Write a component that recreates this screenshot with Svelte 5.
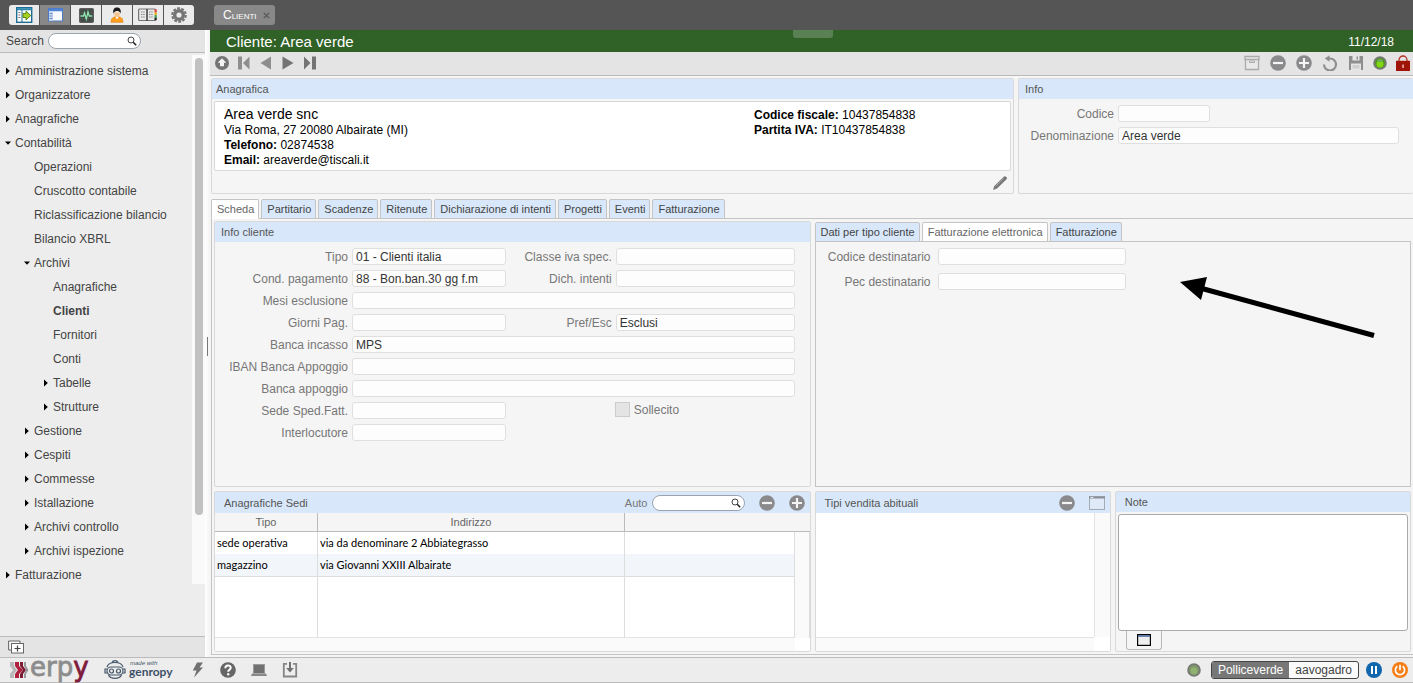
<script>
  const tree = [
    { t: 'Amministrazione sistema', l: 0, s: 'closed' },
    { t: 'Organizzatore', l: 0, s: 'closed' },
    { t: 'Anagrafiche', l: 0, s: 'closed' },
    { t: 'Contabilità', l: 0, s: 'open' },
    { t: 'Operazioni', l: 1 },
    { t: 'Cruscotto contabile', l: 1 },
    { t: 'Riclassificazione bilancio', l: 1 },
    { t: 'Bilancio XBRL', l: 1 },
    { t: 'Archivi', l: 1, s: 'open' },
    { t: 'Anagrafiche', l: 2 },
    { t: 'Clienti', l: 2, current: true },
    { t: 'Fornitori', l: 2 },
    { t: 'Conti', l: 2 },
    { t: 'Tabelle', l: 2, s: 'closed' },
    { t: 'Strutture', l: 2, s: 'closed' },
    { t: 'Gestione', l: 1, s: 'closed' },
    { t: 'Cespiti', l: 1, s: 'closed' },
    { t: 'Commesse', l: 1, s: 'closed' },
    { t: 'Istallazione', l: 1, s: 'closed' },
    { t: 'Archivi controllo', l: 1, s: 'closed' },
    { t: 'Archivi ispezione', l: 1, s: 'closed' },
    { t: 'Fatturazione', l: 0, s: 'closed' }
  ];
  const tabs = ['Scheda', 'Partitario', 'Scadenze', 'Ritenute', 'Dichiarazione di intenti', 'Progetti', 'Eventi', 'Fatturazione'];
  const subTabs = ['Dati per tipo cliente', 'Fatturazione elettronica', 'Fatturazione'];
  let tab = $state('Scheda');
  let subTab = $state('Fatturazione elettronica');
  const fields = [
    { id: 'tipo', label: 'Tipo', value: '01 - Clienti italia' },
    { id: 'classe', label: 'Classe iva spec.', value: '' },
    { id: 'cond', label: 'Cond. pagamento', value: '88 - Bon.ban.30 gg f.m' },
    { id: 'dich', label: 'Dich. intenti', value: '' },
    { id: 'mesi', label: 'Mesi esclusione', value: '', wide: true },
    { id: 'giorni', label: 'Giorni Pag.', value: '' },
    { id: 'pref', label: 'Pref/Esc', value: 'Esclusi' },
    { id: 'banca', label: 'Banca incasso', value: 'MPS', wide: true },
    { id: 'iban', label: 'IBAN Banca Appoggio', value: '', wide: true },
    { id: 'appoggio', label: 'Banca appoggio', value: '', wide: true },
    { id: 'sede', label: 'Sede Sped.Fatt.', value: '' }
  ];
</script>

{#snippet minus()}
  <svg width="16" height="16" viewBox="0 0 16 16"><circle cx="8" cy="8" r="7.8" fill="#8a8a8c" /><path d="M3 8h10" stroke="#f4f4f4" stroke-width="2.2" /></svg>
{/snippet}
{#snippet plus()}
  <svg width="16" height="16" viewBox="0 0 16 16"><circle cx="8" cy="8" r="7.8" fill="#8a8a8c" /><path d="M3 8h10M8 3v10" stroke="#f4f4f4" stroke-width="2.2" /></svg>
{/snippet}
{#snippet lens()}
  <svg class="lens" width="10" height="10" viewBox="0 0 10 10"><circle cx="4" cy="4" r="3" fill="#fff" stroke="#444" /><path d="M6.2 6.2L9.2 9.2" stroke="#222" stroke-width="1.6" /></svg>
{/snippet}

<div class="app">
  <header class="topbar">
    <div class="modes">
      <button aria-label="Apri menu">
        <svg width="17" height="16" viewBox="0 0 17 16"><rect x=".7" y=".7" width="15" height="14.6" fill="#fff" stroke="#1d6c92" stroke-width="1.4" /><path d="M1 2.2h15" stroke="#2b86ab" stroke-width="2" /><path d="M6 3v12" stroke="#1d6c92" /><path d="M2.4 5.5h2M2.4 8h2M2.4 10.500h2" stroke="#777" /><path d="M7 6.500h3V4l4.800 4.500L10 13v-2.500H7z" fill="#a6d11e" stroke="#4f7d10" stroke-width=".9" /></svg>
      </button>
      <button class="on" aria-label="Menu">
        <svg width="15" height="14" viewBox="0 0 15 14"><rect x=".5" y=".5" width="14" height="12.500" fill="#f7faff" stroke="#4c78c0" /><path d="M.5 2h14" stroke="#4f83d6" stroke-width="2.500" /><rect x="1" y="3.300" width="4" height="9.200" fill="#c9d9f2" /><path d="M1.500 5.500h3M1.500 8h3M1.500 10.500h3" stroke="#6f8fc4" /></svg>
      </button>
      <button aria-label="Monitor">
        <svg width="15" height="15" viewBox="0 0 15 15"><rect x=".7" y=".7" width="13.600" height="13.600" rx="1" fill="#3d4541" stroke="#5d5d5d" stroke-width="1.400" /><path d="M3 2v11M6 2v11M9 2v11M12 2v11M2 4.500h11M2 10.500h11" stroke="#59645e" stroke-width=".5" /><path d="M1.500 8h3l1-3 1.800 6 1.700-7 1.300 4h3" fill="none" stroke="#8fe3b0" stroke-width="1.300" /></svg>
      </button>
      <button aria-label="Utente">
        <svg width="14" height="16" viewBox="0 0 14 16"><path d="M1 15.300c0-4 2-5.600 6-5.600s6 1.600 6 5.600z" fill="#ff9d1e" stroke="#d9780a" stroke-width=".6" /><path d="M5.300 9.600L7 12.500l1.700-2.900z" fill="#fff" /><path d="M4 5.500c0 3 1.300 4.600 3 4.600s3-1.600 3-4.600z" fill="#f6c58f" /><path d="M3.300 6.500C2.800 2.400 4.200.6 7 .6s4.200 1.800 3.700 5.900C10 5 9 4 7.500 4 6 4 4.300 4.500 3.300 6.500z" fill="#1c1c1c" /></svg>
      </button>
      <button aria-label="Rubrica">
        <svg width="20" height="14" viewBox="0 0 20 14"><rect x=".6" y="1" width="17" height="11.500" rx="1" fill="#e8e8e8" stroke="#777" stroke-width="1.200" /><path d="M9 1v12" stroke="#333" stroke-width="1.400" /><path d="M3 4h4M3 6.500h4M3 9h4M11 4h4M11 6.500h4M11 9h4" stroke="#888" stroke-dasharray="1.500 .7" /><path d="M17.600 1.200v3" stroke="#d44" stroke-width="2.200" /><path d="M17.600 4.200v3" stroke="#e8b21a" stroke-width="2.200" /><path d="M17.600 7.200v2.500" stroke="#35a552" stroke-width="2.200" /><path d="M17.600 9.700v2.500" stroke="#222" stroke-width="2.200" /></svg>
      </button>
      <button aria-label="Impostazioni">
        <svg width="16" height="16" viewBox="0 0 16 16"><circle cx="8" cy="8" r="4.300" fill="none" stroke="#747474" stroke-width="3.400" /><circle cx="8" cy="8" r="6.700" fill="none" stroke="#747474" stroke-width="2.200" stroke-dasharray="2.800 1.410" /></svg>
      </button>
    </div>
    <div class="pagetab"><span>Clienti</span><button aria-label="Chiudi"><svg width="7" height="7" viewBox="0 0 7 7"><path d="M.8.8l5.400 5.400M6.200.8L.8 6.200" stroke="#555" stroke-width="1.200" /></svg></button></div>
  </header>

  <div class="body">
    <aside>
      <div class="searchrow"><label for="q">Search</label><span class="pill"><input id="q" type="text" />{@render lens()}</span></div>
      <div class="treearea">
        <nav>
          {#each tree as n}
            <a href="#top" class={'node l' + n.l} class:current={n.current}>
              <span class="mark">
                {#if n.s === 'closed'}<svg width="6" height="8" viewBox="0 0 6 8"><path d="M1 .5L4.800 4 1 7.500z" /></svg>
                {:else if n.s === 'open'}<svg width="6" height="8" viewBox="0 0 6 8"><path d="M0 2.500h6L3 5.800z" /></svg>{/if}
              </span>{n.t}</a>
          {/each}
        </nav>
        <div class="rail"><div class="thumb"></div></div>
      </div>
      <div class="sidefoot">
        <button aria-label="Nuova finestra"><svg width="16" height="14" viewBox="0 0 16 14"><path d="M3 10H.6V1H12v2" fill="#f6f6f6" stroke="#666" /><rect x="3.500" y="3.500" width="12" height="9.500" fill="#fff" stroke="#666" /><path d="M9.500 5.500v6M6.500 8.500h6" stroke="#444" stroke-width="1.200" /></svg></button>
      </div>
    </aside>
    <div class="splitter"><i></i></div>

    <main>
      <div class="title"><h1>Cliente: Area verde</h1><i class="grip"></i><time>11/12/18</time></div>
      <div class="tools">
        <div class="navs">
          <button aria-label="Elenco"><svg width="14" height="14" viewBox="0 0 14 14"><circle cx="7" cy="7" r="7" fill="#747474" /><path d="M7 2.300l4.300 4.400H9v3.600H5V6.700H2.700z" fill="#f5f5f5" /></svg></button>
          <button aria-label="Primo"><svg width="14" height="14" viewBox="0 0 14 14"><path d="M1 .5h4v13H1zM12.500.5v13L6 7z" fill="#8e8e8e" /></svg></button>
          <button aria-label="Precedente"><svg width="14" height="14" viewBox="0 0 14 14"><path d="M12 .5v13L1.500 7z" fill="#8e8e8e" /></svg></button>
          <button aria-label="Successivo"><svg width="14" height="14" viewBox="0 0 14 14"><path d="M1.500.5v13L12.500 7z" fill="#747474" /></svg></button>
          <button aria-label="Ultimo"><svg width="14" height="14" viewBox="0 0 14 14"><path d="M9 .5h4v13H9zM1 .5v13L7.500 7z" fill="#747474" /></svg></button>
        </div>
        <div class="acts">
          <button aria-label="Archivia"><svg width="16" height="16" viewBox="0 0 16 16"><path d="M1 1.500h14v3H1zM1.500 4.500h13v10h-13z" fill="#e9e9e9" stroke="#aaa" stroke-width="1.300" /><path d="M5.500 6h5v1.500h-5z" fill="#fff" stroke="#999" stroke-width=".8" /></svg></button>
          <button aria-label="Elimina">{@render minus()}</button>
          <button aria-label="Aggiungi">{@render plus()}</button>
          <button aria-label="Ripristina"><svg width="16" height="16" viewBox="0 0 16 16"><path d="M2 9.500a6 6 0 1 0 6-6H6" fill="none" stroke="#8e8e8e" stroke-width="2.200" /><path d="M7.500.3v6.400L2.800 3.500z" fill="#8e8e8e" /></svg></button>
          <button aria-label="Salva"><svg width="16" height="16" viewBox="0 0 16 16"><path d="M1 1h14v14H1z" fill="#8e8e8e" /><path d="M4.500 1h7v4.500h-7z" fill="#e6e6e6" /><path d="M8.500 1.500h1.500v3H8.500z" fill="#8e8e8e" /><path d="M3 8.500h10V15H3z" fill="#e6e6e6" /><path d="M4.500 10h7v3.500h-7z" fill="#d0d0d0" /></svg></button>
        </div>
        <svg width="14" height="14" viewBox="0 0 14 14"><circle cx="7" cy="7" r="5.800" fill="#4a9418" stroke="#757a73" stroke-width="2" /><circle cx="7" cy="8" r="3.500" fill="#7fd810" /><ellipse cx="7" cy="4.500" rx="3" ry="1.600" fill="#6fae55" /></svg>
        <button aria-label="Blocca"><svg width="14" height="16" viewBox="0 0 14 16"><path d="M3 7V5a4 4 0 0 1 8 0v2" fill="none" stroke="#b33427" stroke-width="1.300" /><path d="M0 5.800h14V16H0z" fill="#a01408" /><path d="M6.300 9.500h1.500v3.500H6.300z" fill="#f2b9b2" /></svg></button>
      </div>

      <div class="top">
        <section class="panel ana">
          <h2>Anagrafica</h2>
          <div class="card">
            <div><span class="big">Area verde snc</span><br />Via Roma, 27 20080 Albairate (MI)<br /><b>Telefono:</b> 02874538<br /><b>Email:</b> areaverde@tiscali.it</div>
            <div class="codes"><b>Codice fiscale:</b> 10437854838<br /><b>Partita IVA:</b> IT10437854838</div>
          </div>
          <button class="edit" aria-label="Modifica"><svg width="14" height="14" viewBox="0 0 14 14"><path d="M0 14l1.300-4L10.800.8Q12-.2 13.300 1t0 2.400L4 12.500z" fill="#777" /><path d="M2.500 10.500l8-8" stroke="#aaa" stroke-width=".9" /></svg></button>
        </section>
        <section class="panel info">
          <h2>Info</h2>
          <div class="infoform">
            <label for="codice">Codice</label><input id="codice" class="short" />
            <label for="denom">Denominazione</label><input id="denom" value="Area verde" />
          </div>
        </section>
      </div>

      <div class="tabs">
        {#each tabs as t}<button class:active={tab === t} onclick={() => (tab = t)}>{t}</button>{/each}
      </div>
      <div class="pane">
        <section class="panel half">
          <h2>Info cliente</h2>
          <div class="form">
            {#each fields as f}
              <label for={f.id}>{f.label}</label><input id={f.id} class:wide={f.wide} value={f.value} />
            {/each}
            <span class="check"><input id="soll" type="checkbox" /><label for="soll">Sollecito</label></span>
            <label for="inter">Interlocutore</label><input id="inter" />
          </div>
        </section>

        <section class="half sub">
          <div class="tabs subtabs">
            {#each subTabs as t}<button class:active={subTab === t} onclick={() => (subTab = t)}>{t}</button>{/each}
          </div>
          <div class="subpane">
            <label for="cd">Codice destinatario</label><input id="cd" />
            <label for="pd">Pec destinatario</label><input id="pd" />
            <svg class="arrow" width="196" height="64" viewBox="0 0 196 64"><path d="M0 5L27 0 21 23z" /><path d="M22 11.500L194 58.500" stroke="#000" stroke-width="5" /></svg>
          </div>
        </section>

        <section class="panel half">
          <div class="bar"><h3>Anagrafiche Sedi</h3><label for="auto">Auto</label><span class="pill"><input id="auto" type="text" />{@render lens()}</span>
            <button aria-label="Elimina sede">{@render minus()}</button><button aria-label="Aggiungi sede">{@render plus()}</button></div>
          <table>
            <colgroup><col class="c1" /><col class="c2" /><col /><col class="c4" /></colgroup>
            <thead><tr><th>Tipo</th><th>Indirizzo</th><th colspan="2"></th></tr></thead>
            <tbody>
              <tr><td>sede operativa</td><td>via da denominare 2 Abbiategrasso</td><td></td><td class="track" rowspan="3"></td></tr>
              <tr class="alt"><td>magazzino</td><td>via Giovanni XXIII Albairate</td><td></td></tr>
              <tr class="fill"><td></td><td></td><td></td></tr>
            </tbody>
            <tfoot><tr><td colspan="3"></td><td class="corner"></td></tr></tfoot>
          </table>
        </section>

        <section class="panel">
          <div class="bar"><h3>Tipi vendita abituali</h3>
            <button aria-label="Elimina tipo">{@render minus()}</button>
            <button aria-label="Scegli tipo"><svg width="16" height="14" viewBox="0 0 16 14"><rect x=".5" y=".5" width="15" height="13" fill="#dfe9f7" stroke="#a3abb5" /><path d="M0 1.500h16" stroke="#8a8f96" stroke-width="2" /><path d="M1.500 1.500h3" stroke="#dfe9f7" /></svg></button></div>
          <div class="empty"><div></div><i></i><b></b></div>
        </section>

        <section class="panel note">
          <h2><label for="note">Note</label></h2>
          <textarea id="note"></textarea>
          <button class="notebtn" aria-label="Espandi note"><svg width="14" height="12" viewBox="0 0 14 12"><rect x=".6" y=".6" width="12.800" height="10.800" fill="#eee" stroke="#000" stroke-width="1.200" /><path d="M1 2h12" stroke="#3f639b" stroke-width="1.500" /></svg></button>
        </section>
      </div>
    </main>
  </div>

  <footer>
    <svg class="logo" width="80" height="24" viewBox="0 0 80 24">
      <path d="M1 4h4v4l3 4-3 4v4H1v-4l3-4-3-4z" fill="#b9b9b9" /><path d="M6 4h4v4l4 4-4 4v4H6v-4l3-4-3-4z" fill="#b01f3c" /><path d="M11 4h3v4l3 4-3 4v4h-3v-4l3-4-3-4z" fill="#7c1c33" /><path d="M15 4h2v4l2.500 4-2.500 4v4h-2v-4l2-4-2-4z" fill="#9a9a9a" />
      <text x="21" y="18" font-family="DejaVu Sans" font-size="26" fill="#8d8d8d" stroke="#8d8d8d" stroke-width=".8">erp<tspan fill="#7f1c3c" stroke="#7f1c3c">y</tspan></text>
    </svg>
    <svg class="logo" width="68" height="24" viewBox="0 0 68 24">
      <g fill="none" stroke="#46586b" stroke-width="1.200"><path d="M3 9C4 5.500 7 4.500 11 4.500S18 5.500 19 9M8 4.500C9 2 13 2 14 4.500" /><rect x="3" y="9" width="16" height="8" rx="4" /><circle cx="7.500" cy="13" r="2" /><circle cx="14.500" cy="13" r="2" /><path d="M3 11H1v4h2M19 11h2v4h-2M4.500 17c2 4.500 11 4.500 13 0" /></g>
      <text x="26" y="7" font-family="Liberation Sans" font-size="6" font-style="italic" fill="#46586b">made with</text>
      <text x="25" y="18" font-family="Lato" font-size="12" font-weight="700" fill="#3d5068">genropy</text>
    </svg>
    <button class="bolt" aria-label="Rapido"><svg width="12" height="16" viewBox="0 0 12 16"><path d="M5 .5h6L7.500 5.500H11L2 15.500l2.500-7H.8z" fill="#707070" /></svg></button>
    <button aria-label="Aiuto"><svg width="16" height="16" viewBox="0 0 16 16"><circle cx="8" cy="8" r="7.800" fill="#666" /><path d="M5.300 6.200c0-3.600 5.400-3.500 5.400-.4 0 2-2.500 2-2.500 4" fill="none" stroke="#fff" stroke-width="2" /><circle cx="8.200" cy="12.300" r="1.200" fill="#fff" /></svg></button>
    <button aria-label="Dispositivo"><svg width="16" height="12" viewBox="0 0 16 12"><rect x="2" y="0" width="12" height="9.500" fill="#9a9a9a" /><rect x="3" y="1" width="10" height="8" fill="#707070" /><path d="M1 9.500h14l1 2.500H0z" fill="#888" /></svg></button>
    <button aria-label="Scarica"><svg width="16" height="16" viewBox="0 0 16 16"><path d="M5 1.800H1.800v12.700h12.400V1.800H11" fill="none" stroke="#858585" stroke-width="1.800" /><path d="M7 0h2v6h2.800L8 10.500 4.200 6H7z" fill="#707070" /></svg></button>
    <span class="space"></span>
    <svg width="14" height="14" viewBox="0 0 14 14"><circle cx="7" cy="7" r="5.800" fill="#7f9c68" stroke="#777b74" stroke-width="2" /><circle cx="7" cy="8" r="3.500" fill="#8fb271" /></svg>
    <div class="user"><span>Polliceverde</span><span>aavogadro</span></div>
    <div class="session">
      <button aria-label="Pausa"><svg width="16" height="16" viewBox="0 0 16 16"><circle cx="8" cy="8" r="8" fill="#0f66ad" /><path d="M6 4v8M10 4v8" stroke="#fff" stroke-width="2" /></svg></button>
      <button aria-label="Esci"><svg width="16" height="16" viewBox="0 0 16 16"><circle cx="8" cy="8" r="8" fill="#f57d14" /><path d="M5.300 4.300a4.600 4.600 0 1 0 5.400 0M8 2.800v5.400" fill="none" stroke="#fff" stroke-width="1.700" /></svg></button>
    </div>
  </footer>
</div>

<style>
  :global(body) { margin: 0; }
  .app, .app * { box-sizing: border-box; }
  .app { min-height: 100vh; display: flex; flex-direction: column; background: #f5f5f5; font: 12px/15px "Liberation Sans", Arial, sans-serif; color: #444; }
  svg { display: block; flex: none; }
  button { font: inherit; color: inherit; background: none; border: 0; padding: 0; display: flex; align-items: center; justify-content: center; }
  h1, h2, h3 { margin: 0; font-weight: 400; }
  input { font: inherit; color: #333; height: 17px; min-width: 0; width: 100%; border: 1px solid #dfdfdf; border-radius: 3px; background: #fdfdfd; padding: 0 3px; margin: 0; }

  .topbar { height: 30px; background: #555; display: flex; align-items: center; padding: 0 9px; gap: 20px; }
  .modes { display: flex; gap: 1px; height: 20px; border-radius: 3px; overflow: hidden; background: #555; }
  .modes button { width: 30px; background: #ebebeb; }
  .modes button.on { background: #888; }
  .pagetab { height: 20px; display: flex; align-items: center; gap: 6px; padding: 0 5px 0 9px; background: #888; border-radius: 3px; color: #fff; font-variant: small-caps; }

  .body { flex: 1; display: flex; }
  aside { width: 205px; flex: none; background: #ededed; display: flex; flex-direction: column; }
  .searchrow { height: 23px; display: flex; align-items: center; gap: 4px; padding-left: 6px; background: #e4e4e4; border-bottom: 1px solid #bbb; }
  .pill { position: relative; width: 93px; display: block; flex: none; }
  .pill input { display: block; height: 16px; border: 1px solid #9aa3ae; border-radius: 8px; background: #fff; padding: 0 18px 0 8px; }
  .pill :global(.lens) { position: absolute; right: 4px; top: 3px; }
  .treearea { flex: 1; display: flex; align-items: flex-start; padding-top: 2px; }
  nav { flex: 1; padding-top: 4px; }
  .node { display: flex; align-items: center; height: 24px; color: #444; text-decoration: none; white-space: nowrap; }
  .node.current { font-weight: 700; }
  .mark { width: 10px; margin-left: 5px; flex: none; }
  .l1 { padding-left: 19px; }
  .l2 { padding-left: 38px; }
  .rail { width: 13px; height: 529px; background: #fafafa; padding: 3px; }
  .thumb { width: 8px; height: 457px; border-radius: 4px; background: #c1c1c1; }
  .sidefoot { height: 21px; border-top: 1px solid #bbb; background: #e4e4e4; display: flex; align-items: center; padding: 0 0 1px 8px; }
  .splitter { width: 5px; flex: none; display: flex; align-items: center; justify-content: center; background: linear-gradient(90deg, #fff, #f3f3f3); padding-top: 5px; }
  .splitter i { width: 1px; height: 19px; background: #777; }

  main { flex: 1; min-width: 0; display: flex; flex-direction: column; }
  .title { height: 22px; background: #306228; color: #fff; display: grid; grid-template-columns: 1fr 40px 1fr; padding: 0 14px 0 16px; align-items: center; }
  h1 { font-size: 15px; line-height: 24px; }
  .grip { align-self: start; height: 8px; border-radius: 0 0 3px 3px; background: #5a8153; }
  time { text-align: right; padding: 1px 5px 0 0; }
  .tools { height: 24px; background: #e4e4e4; border-bottom: 1px solid #bbb; display: flex; align-items: center; gap: 9px; padding: 0 3px 2px 5px; }
  .navs { display: flex; gap: 8px; flex: 1; }
  .acts { display: flex; gap: 10px; }

  .top { display: grid; grid-template-columns: minmax(0, 1fr) 395px; gap: 4px; padding: 2px 0 0 1px; height: 118px; }
  .panel { border: 1px solid #d9d9d9; display: flex; flex-direction: column; min-width: 0; background: #f5f5f5; border-radius: 2px; }
  .panel h2 { height: 20px; font-size: 11px; line-height: 20px; padding: 0 6px; background: #d8e8fa; color: #555; flex: none; }
  .panel.ana h2 { padding: 0 4px; }
  .panel.note h2 { padding: 0 9px; }
  .info { border-right: 0; }
  .card { margin: 2px; height: 70px; background: #fff; border: 1px solid #d9d9d9; border-radius: 2px; color: #000; display: grid; grid-template-columns: 530fr 256fr; padding: 5px 0 0 9px; white-space: nowrap; }
  .codes { padding-top: 1px; }
  .big { font-size: 14px; }
  .edit { align-self: flex-end; margin: 3px 6px 0 0; }
  .infoform { display: grid; grid-template-columns: 95px 1fr; gap: 3px 4px; padding: 5px 14px 0 0; align-items: center; }
  .infoform label, .form label, .subpane label { text-align: right; color: #777; line-height: 17px; padding-top: 2px; white-space: nowrap; }
  .short { width: 92px; }

  .tabs { display: flex; gap: 2px; padding: 5px 0 0 1px; height: 24px; }
  .tabs button { height: 20px; padding: 0 4px 0 5px; font-size: 11px; background: #d8e8fa; border: 1px solid #c4c4c4; border-radius: 2px 2px 0 0; position: relative; white-space: nowrap; }
  .tabs button.active { background: #fff; border-bottom-color: #fff; color: #666; }
  .pane { flex: 1; border: 1px solid #c4c4c4; border-right: 0; margin: 0 0 2px 1px; padding: 2px; display: grid; grid-template-columns: repeat(4, minmax(0, 1fr)); grid-template-rows: minmax(266px, 1fr) 161px; gap: 4px; }
  .half { grid-column: span 2; }
  .form { display: grid; grid-template-columns: 133px 154fr 102px 179fr; gap: 3px 4px; padding: 5px 15px 0 0; align-items: center; }
  .wide { grid-column: span 3; }
  .check { grid-column: span 2; display: flex; align-items: center; align-self: start; gap: 4px; padding-left: 105px; height: 17px; }
  .check input { appearance: none; width: 15px; height: 15px; border: 1px solid #ccc; border-radius: 0; background: #e4e4e4; }

  .sub { display: flex; flex-direction: column; }
  .subtabs { padding: 1px 0 0; height: 20px; }
  .subpane { flex: 1; border: 1px solid #c4c4c4; display: grid; grid-template-columns: 115px 188px; gap: 6px 7px; padding-top: 5px; align-content: start; align-items: center; position: relative; }
  .arrow { position: absolute; left: 364px; top: 35px; }

  .bar { height: 21px; flex: none; display: flex; align-items: center; background: #d8e8fa; gap: 14px; padding: 0 5px 0 9px; font-size: 11px; color: #555; }
  .bar h3 { flex: 1; font-size: 11px; padding-top: 1px; }
  .bar label { margin-right: -10px; color: #777; padding-top: 1px; }
  table { border-collapse: separate; border-spacing: 0; table-layout: fixed; width: 100%; background: #fff; color: #000; font: 11px/14px Lato, sans-serif; }
  .c1 { width: 103px; }
  .c2 { width: 307px; }
  .c4 { width: 15px; }
  th { height: 19px; padding: 0; background: #f5f5f5; font: 11px/14px "Liberation Sans", Arial, sans-serif; color: #666; border-right: 1px solid #bbb; border-bottom: 1px solid #bbb; }
  th:last-child { border-right: 0; }
  td { height: 22px; padding: 0 2px; border-right: 1px solid #ddd; white-space: nowrap; }
  .alt td { background: #f2f5fa; height: 23px; border-bottom: 1px solid #ddd; }
  .fill td { height: 61px; border-bottom: 1px solid #e4e4e4; }
  .track { background: #fafafa; }
  tfoot td { height: 13px; border: 0; background: #fafafa; padding: 0; }
  tfoot .corner { background: #fff; }
  .empty { flex: 1; display: grid; grid-template: 1fr 14px / 1fr 16px; background: #fff; }
  .empty i { background: #fafafa; border-left: 1px solid #e4e4e4; }
  .empty b { background: #fafafa; border-top: 1px solid #e4e4e4; }
  textarea { flex: 1; margin: 2px 2px 0; border: 1px solid #aaa; border-radius: 3px; resize: none; background: #fff; font: inherit; }
  .notebtn { width: 36px; height: 19px; flex: none; margin: 0 0 1px 10px; border: 1px solid #bbb; border-top: 0; border-radius: 0 0 3px 3px; }

  footer { height: 26px; border-top: 1px solid #bbb; border-bottom: 1px solid #bbb; background: #ededed; display: flex; align-items: center; gap: 15px; padding: 0 5px 0 9px; }
  .logo { overflow: visible; }
  .bolt { width: 14px; margin-left: 4px; }
  .space { flex: 1; }
  .user { display: flex; height: 18px; border: 1px solid #444; border-radius: 3px; background: #fafafa; line-height: 16px; margin: 0 -8px 0 -5px; overflow: hidden; }
  .user span { padding: 0 6px; }
  .user span:first-child { background: #777; color: #fff; }
  .session { display: flex; gap: 10px; }
</style>
